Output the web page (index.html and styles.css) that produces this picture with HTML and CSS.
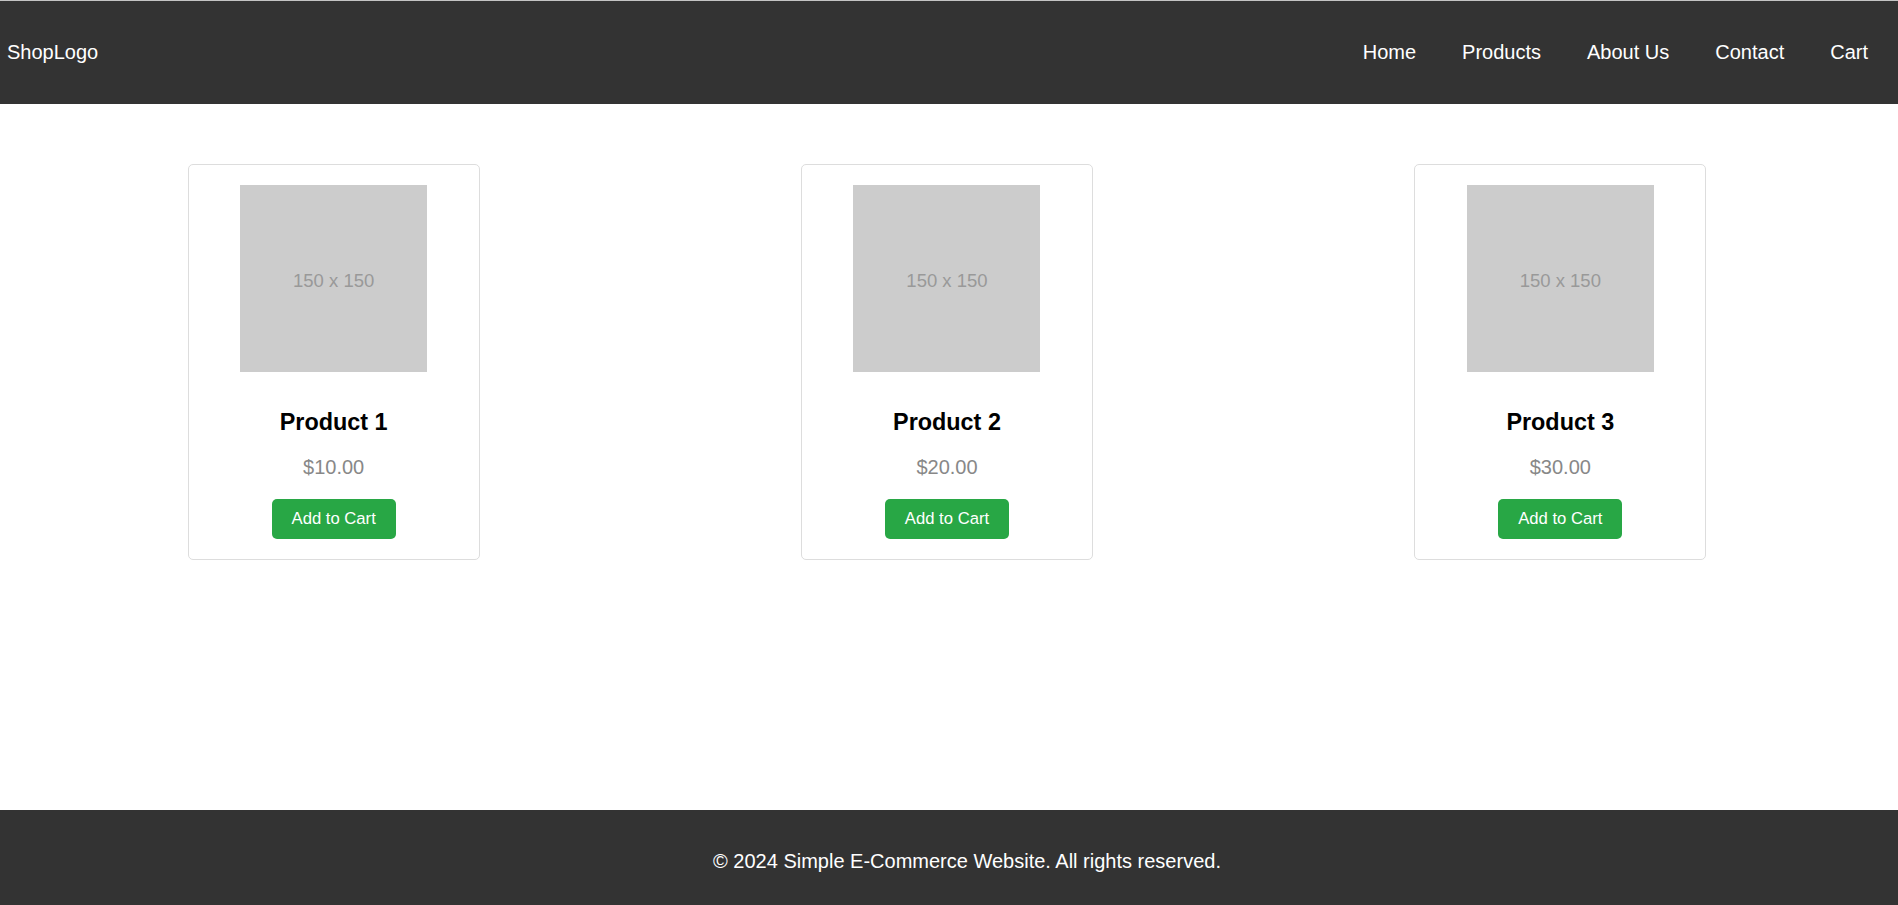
FILE: index.html
```html
<!DOCTYPE html>
<html lang="en">
<head>
<meta charset="utf-8">
<title>Simple E-Commerce Website</title>
<link rel="stylesheet" href="styles.css">
</head>
<body>
<header class="site-header">
  <div class="logo">ShopLogo</div>
  <nav class="nav">
    <a href="#">Home</a>
    <a href="#">Products</a>
    <a href="#">About Us</a>
    <a href="#">Contact</a>
    <a href="#">Cart</a>
  </nav>
</header>
<main class="products">
  <div class="card">
    <div class="thumb">150 x 150</div>
    <h3 class="title">Product 1</h3>
    <p class="price">$10.00</p>
    <button class="btn">Add to Cart</button>
  </div>
  <div class="card">
    <div class="thumb">150 x 150</div>
    <h3 class="title">Product 2</h3>
    <p class="price">$20.00</p>
    <button class="btn">Add to Cart</button>
  </div>
  <div class="card">
    <div class="thumb">150 x 150</div>
    <h3 class="title">Product 3</h3>
    <p class="price">$30.00</p>
    <button class="btn">Add to Cart</button>
  </div>
</main>
<footer class="site-footer">
  <p>&copy; 2024 Simple E-Commerce Website. All rights reserved.</p>
</footer>
</body>
</html>
```
FILE: styles.css
```css
* { box-sizing: border-box; }

html, body { height: 100%; }

body {
  margin: 0;
  font-family: "Liberation Sans", Arial, sans-serif;
  font-size: 20px;
  color: #000;
  background: #fff;
  display: flex;
  flex-direction: column;
  min-height: 100vh;
}

.site-header {
  height: 104px;
  border-top: 1px solid #c4c4c4;
  background: #333;
  color: #fff;
  display: flex;
  align-items: center;
  justify-content: space-between;
  padding: 0 30px 0 7px;
  flex-shrink: 0;
}

.logo {
  font-size: 20px;
  line-height: 23px;
}

.nav {
  display: flex;
  gap: 46px;
}

.nav a {
  color: #fff;
  text-decoration: none;
  font-size: 20px;
  line-height: 23px;
}

.products {
  flex: 1;
  display: flex;
  justify-content: space-around;
  align-items: flex-start;
  padding: 60px 31px 0 27px;
}

.card {
  width: 292px;
  border: 1px solid #ddd;
  border-radius: 5px;
  padding: 20px;
  display: flex;
  flex-direction: column;
  align-items: center;
  text-align: center;
}

.thumb {
  width: 187px;
  height: 187px;
  background: #ccc;
  color: #999;
  font-size: 18.5px;
  display: flex;
  align-items: center;
  justify-content: center;
  padding-top: 4px;
}

.title {
  margin: 37px 0 0;
  font-size: 23.4px;
  line-height: 27px;
  font-weight: bold;
  color: #000;
}

.price {
  margin: 20px 0 0;
  font-size: 20px;
  line-height: 23px;
  color: #888;
}

.btn {
  margin-top: 20px;
  height: 40px;
  padding: 0 20px;
  border: none;
  border-radius: 5px;
  background: #28a745;
  color: #fff;
  font-family: "Liberation Sans", Arial, sans-serif;
  font-size: 16.67px;
  line-height: 20px;
  cursor: pointer;
}

.site-footer {
  flex-shrink: 0;
  height: 95px;
  background: #333;
  color: #fff;
  text-align: center;
  padding: 40px 0 0 36px;
}

.site-footer p {
  margin: 0;
  font-size: 20px;
  line-height: 23px;
}
```
